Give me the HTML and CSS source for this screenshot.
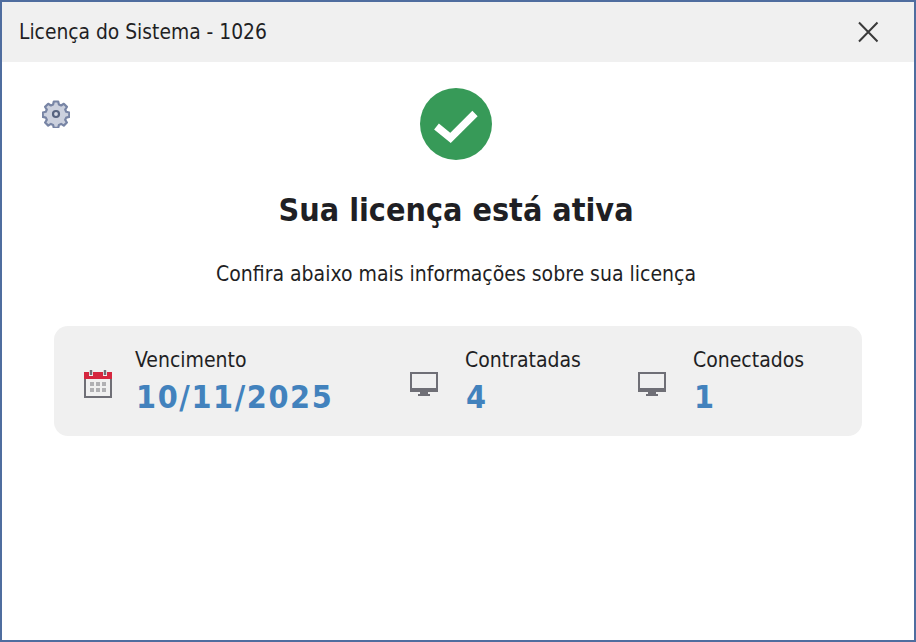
FILE: index.html
```html
<!DOCTYPE html>
<html lang="pt">
<head>
<meta charset="utf-8">
<title>Licença do Sistema - 1026</title>
<link rel="stylesheet" href="styles.css">
</head>
<body>
<div class="window">
  <header class="titlebar">
    <span class="title">Licença do Sistema - 1026</span>
    <svg class="close" width="22" height="22" viewBox="0 0 22 22"><path d="M2 1.500 20.500 20.500M20.500 1.500 2 20.500" stroke="#3a3a3a" stroke-width="2" fill="none"/></svg>
  </header>
  <main class="content">
    <svg class="gear" width="28" height="28" viewBox="0 0 28 28">
      <path d="M11.800 1.500h4.400l.7 3 2.200 1 2.700-1.700 3.100 3.100-1.700 2.700 1 2.200 3 .7v4.400l-3 .7-1 2.200 1.700 2.700-3.100 3.100-2.700-1.700-2.200 1-.7 3h-4.400l-.7-3-2.200-1-2.700 1.700-3.100-3.100 1.700-2.700-1-2.200-3-.7v-4.400l3-.7 1-2.200-1.700-2.700 3.100-3.100 2.700 1.700 2.200-1z" fill="#ccd1de" stroke="#7885a5" stroke-width="2.200" stroke-linejoin="round"/>
      <circle cx="14" cy="14" r="3" fill="#d5d9e4" stroke="#56637f" stroke-width="2.200"/>
    </svg>
    <svg class="check" width="72" height="72" viewBox="0 0 72 72">
      <circle cx="36" cy="36" r="36" fill="#379a58"/>
      <path d="M16.500 38.500 30.500 50 55 25.500" fill="none" stroke="#fff" stroke-width="7.500"/>
    </svg>
    <h1 class="heading">Sua licença está ativa</h1>
    <p class="sub">Confira abaixo mais informações sobre sua licença</p>
    <section class="panel">
      <div class="item">
        <svg class="icon" width="28" height="28" viewBox="0 0 28 28">
          <rect x="1" y="3" width="26" height="24" fill="none" stroke="#6f6f76" stroke-width="2"/>
          <rect x="0" y="2" width="28" height="7" fill="#d5273f"/>
          <path d="M7 0v6M21 0v6" stroke="#f0f0f0" stroke-width="4"/>
          <path d="M7 0v5M21 0v5" stroke="#6f6f76" stroke-width="2.400"/>
          <path d="M6 12h4v4H6zM12 12h4v4h-4zM18 12h4v4h-4zM6 18h4v4H6zM12 18h4v4h-4zM18 18h4v4h-4z" fill="#b0b0b3"/>
        </svg>
        <div class="text">
          <span class="label">Vencimento</span>
          <span class="value">10/11/2025</span>
        </div>
      </div>
      <div class="item">
        <svg class="icon" width="28" height="24" viewBox="0 0 28 24">
          <path d="M0 0h28v20H0zM2 2v14h24V2z" fill="#6f6f76" fill-rule="evenodd"/>
          <path d="M8 22h12v2H8zM10 20h8v2h-8z" fill="#6f6f76"/>
        </svg>
        <div class="text">
          <span class="label">Contratadas</span>
          <span class="value">4</span>
        </div>
      </div>
      <div class="item">
        <svg class="icon" width="28" height="24" viewBox="0 0 28 24">
          <path d="M0 0h28v20H0zM2 2v14h24V2z" fill="#6f6f76" fill-rule="evenodd"/>
          <path d="M8 22h12v2H8zM10 20h8v2h-8z" fill="#6f6f76"/>
        </svg>
        <div class="text">
          <span class="label">Conectados</span>
          <span class="value">1</span>
        </div>
      </div>
    </section>
  </main>
</div>
</body>
</html>
```
FILE: styles.css
```css
* { box-sizing: border-box; }
html, body { margin: 0; height: 100%; }
body { background: #fff; font-family: "DejaVu Sans", sans-serif; font-stretch: condensed; color: #1f1f24; }
.window { height: 642px; border: 2px solid #4f6d9f; display: flex; flex-direction: column; overflow: hidden; }
.titlebar { height: 60px; flex: none; background: #f0f0f0; display: flex; align-items: center; justify-content: space-between; padding: 0 35px 0 17px; }
.title { font-size: 20.800px; }
.close { display: block; }
.content { position: relative; flex: 1; display: flex; flex-direction: column; align-items: center; padding: 26px 4px 0 0; }
.gear { position: absolute; left: 40px; top: 38px; }
.check { display: block; }
.heading { margin: 30px 0 0; font-size: 32px; font-weight: bold; line-height: 40px; }
.sub { margin: 30px 0 0; font-size: 21px; line-height: 28px; }
.panel { align-self: flex-start; margin: 38px 0 0 52px; width: 808px; height: 110px; background: #f0f0f0; border-radius: 14px; display: grid; grid-template-columns: 326px 228px 1fr; padding-left: 30px; align-items: center; }
.item { display: flex; align-items: center; }
.icon { display: block; flex: none; margin-top: 6px; }
.text { display: flex; flex-direction: column; gap: 6px; margin-left: 23px; padding-top: 2px; }
.item + .item .text { margin-left: 27px; }
.label { font-size: 21px; line-height: 24px; }
.value { font-size: 32px; font-weight: bold; line-height: 38px; letter-spacing: 1.600px; padding-left: 1px; color: #4282bd; }
```
